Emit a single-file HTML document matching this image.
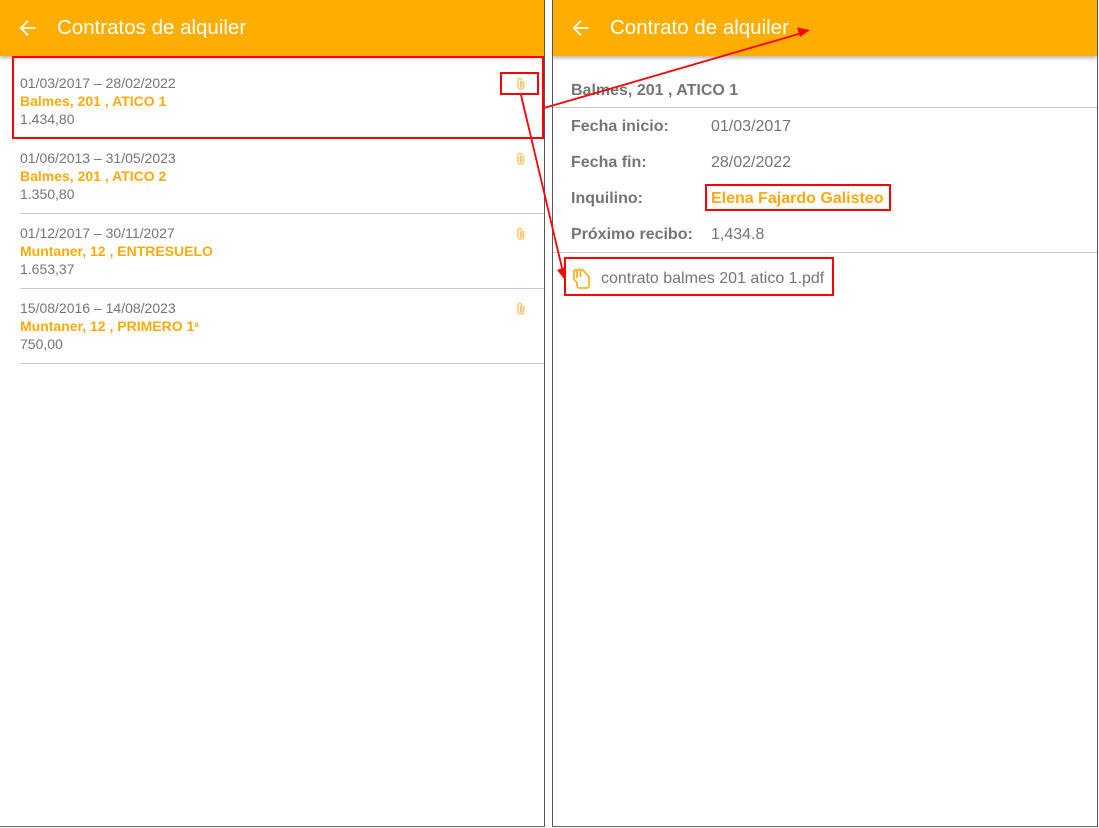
<!DOCTYPE html>
<html lang="es"><head><meta charset="utf-8"><title>Contratos de alquiler</title>
<style>
html,body{margin:0;padding:0;background:#fff}
body{width:1099px;height:828px;position:relative;overflow:hidden;font-family:"Liberation Sans",sans-serif;color:#757575}
.panel{position:absolute;top:0;box-sizing:border-box;background:#fff;overflow:hidden}
#l{left:0;width:545px;border-right:1px solid #555;border-bottom:1px solid #666;height:827px}
#r{left:552px;width:546px;border-left:1px solid #555;border-right:1px solid #555;border-bottom:1px solid #666;height:827px}
.hd{position:absolute;left:0;top:0;right:0;height:56px;background:#ffae00;box-shadow:0 2px 4px rgba(0,0,0,.3)}
.hd span{position:absolute;top:16px;font-size:20.500px;line-height:24px;color:#fff;white-space:nowrap}
.hd svg{position:absolute;top:18px}
.t{position:absolute;white-space:nowrap;font-size:14px;line-height:18px}
.o{color:#ffa90f;font-weight:bold}
.ln{position:absolute;height:1px;background:#c8c8c8}
.b{font-size:16px;line-height:20px;font-weight:bold;color:#757575}
.v{font-size:16px;line-height:20px}
sup{font-size:8px;line-height:0;vertical-align:4px}
#ann{position:absolute;left:0;top:0;z-index:5}
.clip{position:absolute;left:515px}
</style></head><body>
<div class="panel" id="l">
<div class="hd"><svg width="20" height="20" viewBox="0 0 20 20" style="left:18px"><path d="M17.500 10H3.500M10 2.800L2.800 10L10 17.200" fill="none" stroke="#fff" stroke-width="1.800"/></svg><span style="left:57px">Contratos de alquiler</span></div>
<div class="t" style="left:20px;top:74px">01/03/2017 – 28/02/2022</div>
<div class="t o" style="left:20px;top:92px">Balmes, 201 , ATICO 1</div>
<div class="t" style="left:20px;top:110px">1.434,80</div>
<svg class="clip" style="top:77px" width="12" height="14" viewBox="0 0 12 14"><path d="M5.400 4V9.200C5.400 10.300 6.900 10.300 6.900 9.200V3.600C6.900 .6 2.800 .6 2.800 3.600V9.500C2.800 13 8.800 13 8.800 9.500V4" fill="none" stroke="#fbbf5c" stroke-width="1.200"/></svg>
<div class="t" style="left:20px;top:149px">01/06/2013 – 31/05/2023</div>
<div class="t o" style="left:20px;top:167px">Balmes, 201 , ATICO 2</div>
<div class="t" style="left:20px;top:185px">1.350,80</div>
<svg class="clip" style="top:152px" width="12" height="14" viewBox="0 0 12 14"><path d="M5.400 4V9.200C5.400 10.300 6.900 10.300 6.900 9.200V3.600C6.900 .6 2.800 .6 2.800 3.600V9.500C2.800 13 8.800 13 8.800 9.500V4" fill="none" stroke="#fbbf5c" stroke-width="1.200"/></svg>
<div class="ln" style="left:20px;right:0;top:213px"></div>
<div class="t" style="left:20px;top:224px">01/12/2017 – 30/11/2027</div>
<div class="t o" style="left:20px;top:242px">Muntaner, 12 , ENTRESUELO</div>
<div class="t" style="left:20px;top:260px">1.653,37</div>
<svg class="clip" style="top:227px" width="12" height="14" viewBox="0 0 12 14"><path d="M5.400 4V9.200C5.400 10.300 6.900 10.300 6.900 9.200V3.600C6.900 .6 2.800 .6 2.800 3.600V9.500C2.800 13 8.800 13 8.800 9.500V4" fill="none" stroke="#fbbf5c" stroke-width="1.200"/></svg>
<div class="ln" style="left:20px;right:0;top:288px"></div>
<div class="t" style="left:20px;top:299px">15/08/2016 – 14/08/2023</div>
<div class="t o" style="left:20px;top:317px">Muntaner, 12 , PRIMERO 1<sup>a</sup></div>
<div class="t" style="left:20px;top:335px">750,00</div>
<svg class="clip" style="top:302px" width="12" height="14" viewBox="0 0 12 14"><path d="M5.400 4V9.200C5.400 10.300 6.900 10.300 6.900 9.200V3.600C6.900 .6 2.800 .6 2.800 3.600V9.500C2.800 13 8.800 13 8.800 9.500V4" fill="none" stroke="#fbbf5c" stroke-width="1.200"/></svg>
<div class="ln" style="left:20px;right:0;top:363px"></div>
</div>
<div class="panel" id="r">
<div class="hd"><svg width="20" height="20" viewBox="0 0 20 20" style="left:18px"><path d="M17.500 10H3.500M10 2.800L2.800 10L10 17.200" fill="none" stroke="#fff" stroke-width="1.800"/></svg><span style="left:57px">Contrato de alquiler</span></div>
<div class="t b" style="left:18px;top:81px">Balmes, 201 , ATICO 1</div>
<div class="ln" style="left:0;right:0;top:107px"></div>
<div class="t b" style="left:18px;top:117px">Fecha inicio:</div><div class="t v" style="left:158px;top:117px">01/03/2017</div>
<div class="t b" style="left:18px;top:153px">Fecha fin:</div><div class="t v" style="left:158px;top:153px">28/02/2022</div>
<div class="t b" style="left:18px;top:189px">Inquilino:</div><div class="t v o" style="left:158px;top:189px">Elena Fajardo Galisteo</div>
<div class="t b" style="left:18px;top:225px">Próximo recibo:</div><div class="t v" style="left:158px;top:225px">1,434.8</div>
<div class="ln" style="left:0;right:0;top:252px"></div>
<svg style="position:absolute;left:19px;top:268px" width="20" height="22" viewBox="0 0 20 22"><path d="M2 10V3.500C2 1.500 5 1.500 5 3.500V10M5 3C5 1 8.500 1 8.500 3V9M8 2H11L17 9V17C17 19 16 20 15 20H7C6 20 5 19 5 17V14M2 10C2 12 3 13 5 14" fill="none" stroke="#ffb11a" stroke-width="1.700"/></svg>
<div class="t v" style="left:48px;top:269px">contrato balmes 201 atico 1.pdf</div>
</div>
<svg id="ann" width="1099" height="828" viewBox="0 0 1099 828">
<g fill="none" stroke="#f00" stroke-width="2">
<rect x="13" y="57" width="530" height="81"/>
<rect x="501" y="73" width="37" height="21"/>
<rect x="706" y="185" width="184" height="25"/>
<rect x="565" y="258" width="268" height="37"/>
<path d="M544 108L802 33" stroke-width="1.800"/>
<path d="M521 95L562 268" stroke-width="1.800"/>
</g>
<path d="M810 30L797 27.500L800 37Z" fill="#f00"/>
<path d="M565 280L557 270L565 267Z" fill="#f00"/>
</svg>
</body></html>
